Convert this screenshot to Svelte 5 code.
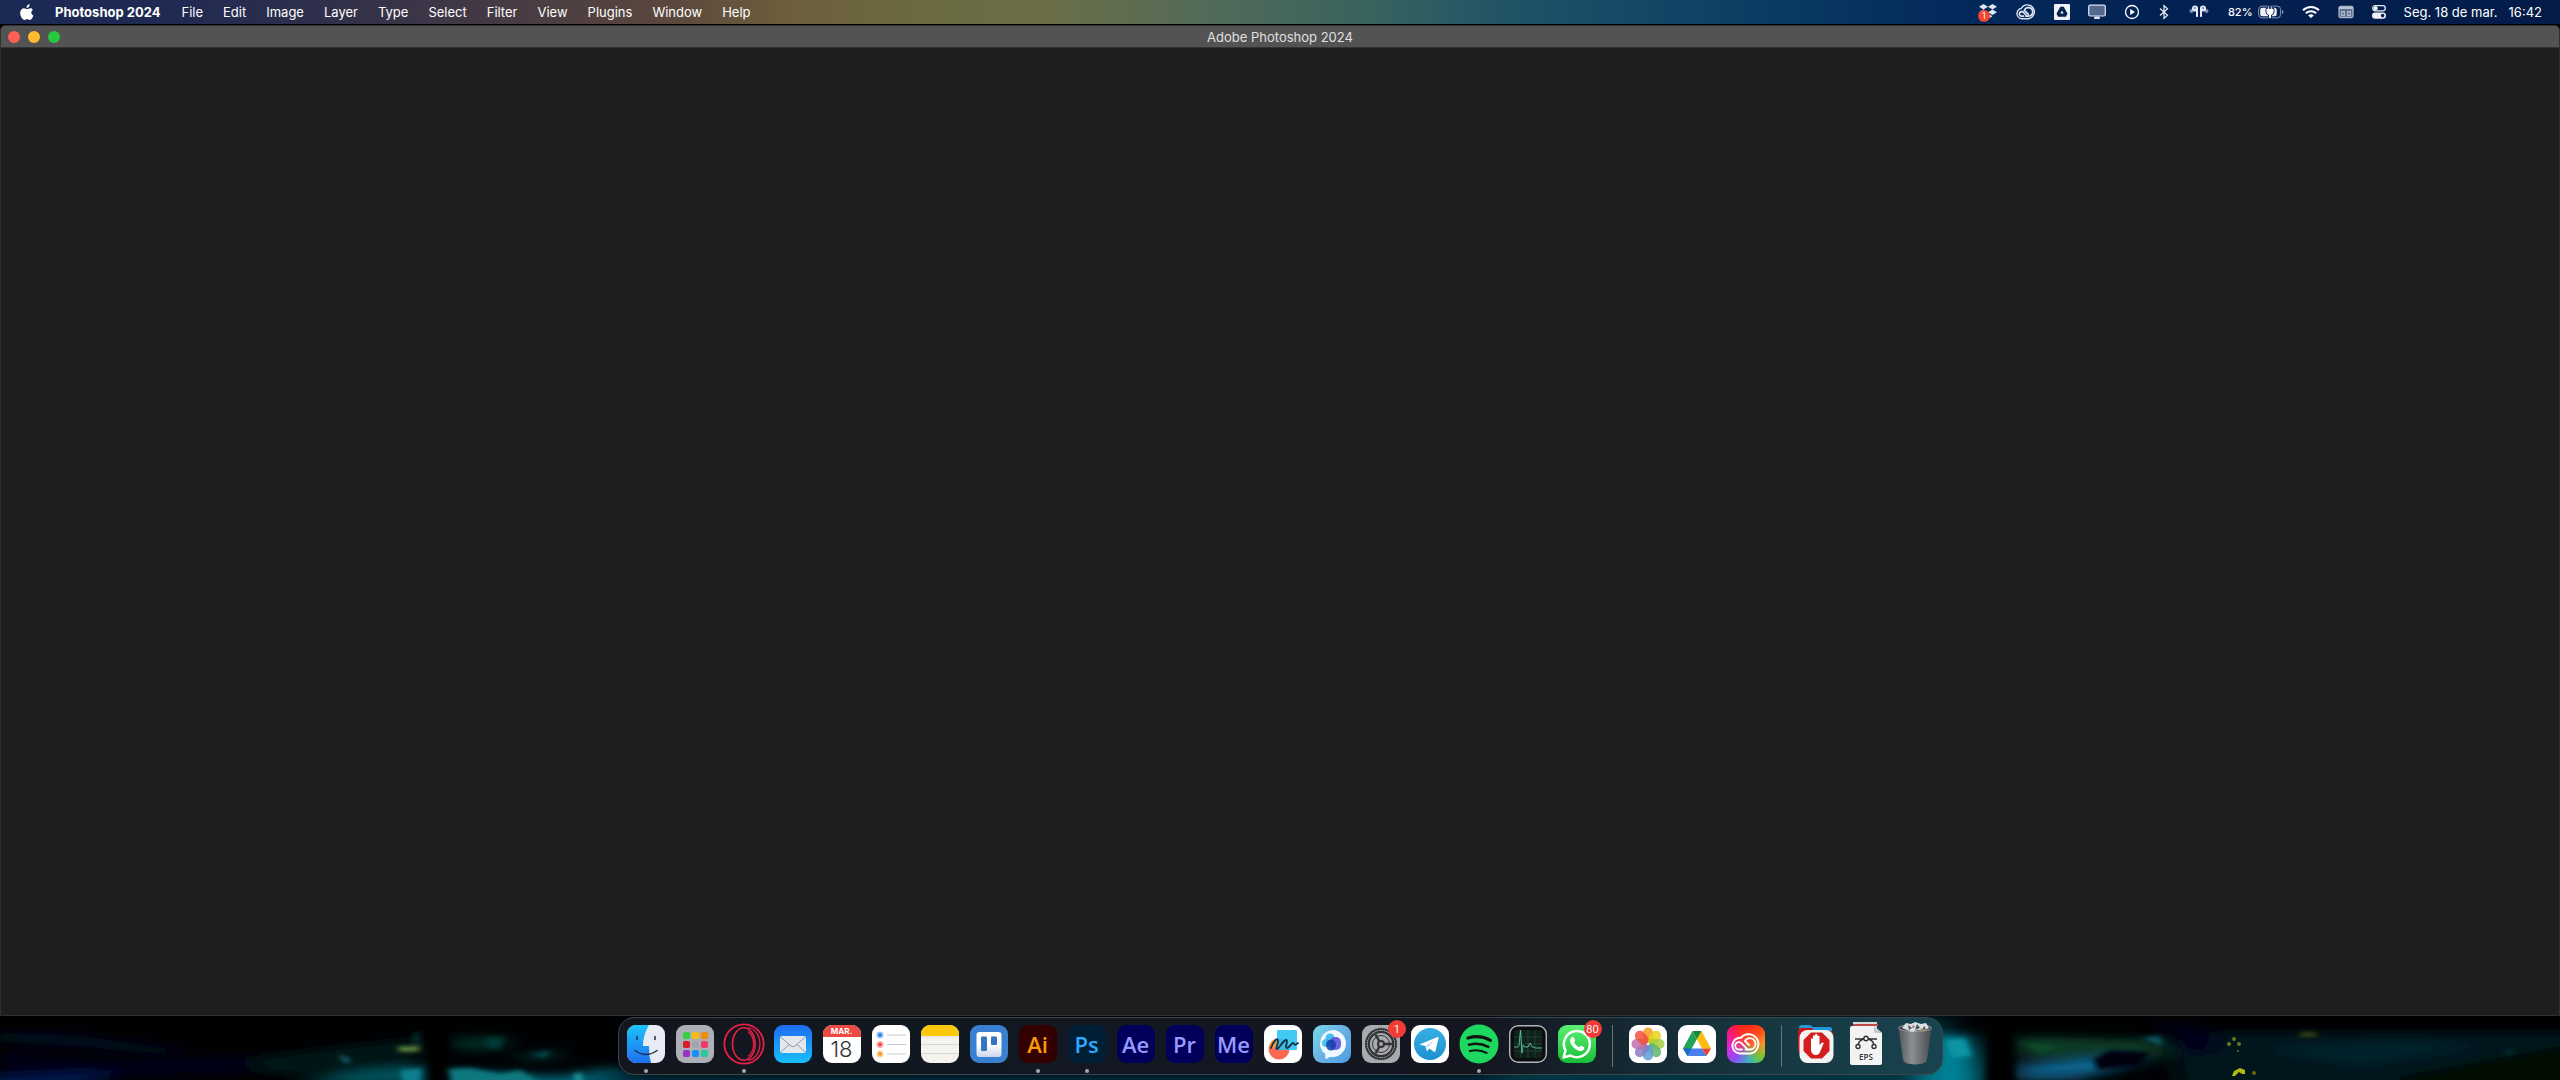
<script>
  const menus = ['File', 'Edit', 'Image', 'Layer', 'Type', 'Select', 'Filter', 'View', 'Plugins', 'Window', 'Help'];
  const main = [
    { id: 'finder', name: 'Finder', open: true },
    { id: 'launchpad', name: 'Launchpad' },
    { id: 'opera', name: 'Opera', open: true },
    { id: 'mail', name: 'Mail' },
    { id: 'calendar', name: 'Calendar' },
    { id: 'reminders', name: 'Reminders' },
    { id: 'notes', name: 'Notes' },
    { id: 'trello', name: 'Trello' },
    { id: 'ai', name: 'Illustrator', label: 'Ai', open: true },
    { id: 'ps', name: 'Photoshop', label: 'Ps', open: true },
    { id: 'ae', name: 'After Effects', label: 'Ae' },
    { id: 'pr', name: 'Premiere Pro', label: 'Pr' },
    { id: 'me', name: 'Media Encoder', label: 'Me' },
    { id: 'freeform', name: 'Freeform' },
    { id: 'chat', name: 'Chat' },
    { id: 'settings', name: 'Settings', badge: '1' },
    { id: 'telegram', name: 'Telegram' },
    { id: 'spotify', name: 'Spotify', open: true },
    { id: 'activity', name: 'Activity Monitor' },
    { id: 'whatsapp', name: 'WhatsApp', badge: '80' }
  ];
  const recent = [
    { id: 'photos', name: 'Photos' },
    { id: 'drive', name: 'Google Drive' },
    { id: 'cc', name: 'Creative Cloud' }
  ];
  const files = [
    { id: 'folder', name: 'Downloads' },
    { id: 'eps', name: 'EPS files' },
    { id: 'trash', name: 'Trash' }
  ];
  const groups = [main, recent, files];
  const petals = ['#f79a1e', '#e8d21a', '#a5cf3c', '#5fb56b', '#5a9fd8', '#8a7cc4', '#c070a8', '#f0503c'];
  const tiles = ['#3ad13e', '#f8bd10', '#f58a07', '#d81e28', '#a0a4ac', '#f03c64', '#9536c8', '#1593f5', '#28c8a0'];
  const teeth = Array.from({ length: 36 }, (_, i) => i * 10);
</script>

<div class="desktop">
  <svg class="wallpaper" viewBox="0 0 2560 64" preserveAspectRatio="none" aria-hidden="true">
    <defs>
      <filter id="soft" filterUnits="userSpaceOnUse" x="-60" y="-30" width="2680" height="124"><feGaussianBlur stdDeviation="14 5" /></filter>
      <filter id="fine" filterUnits="userSpaceOnUse" x="-60" y="-30" width="2680" height="124"><feGaussianBlur stdDeviation="3 2" /></filter>
    </defs>
    <rect width="2560" height="64" fill="#000103" />
    <g filter="url(#soft)">
      <path d="M0 16 L80 20 L170 32 L170 40 L80 30 L0 26Z" fill="#020a20" />
      <path d="M0 36 L100 44 L300 40 L240 58 L0 64Z" fill="#010318" />
      <path d="M-20 60 L110 54 L90 70 L-20 72Z" fill="#05194a" />
      <path d="M250 42 L330 32 L425 22 L420 52 L340 62 L260 56Z" fill="#021619" />
      <path d="M300 70 L360 54 L425 50 L430 70Z" fill="#045058" />
      <path d="M450 54 L520 58 L560 60 L618 50 L640 76 L450 76Z" fill="#046070" />
      <path d="M452 22 L505 20 L500 34 L455 34Z" fill="#043028" />
      <path d="M515 42 L555 34 L550 44Z" fill="#074c4c" />
      <path d="M600 58 H1960 V70 H600Z" fill="#032c3c" />
      <path d="M1500 0 H1950 V70 H1500Z" fill="#063e4c" opacity=".7" />
      <path d="M1930 20 L1968 18 L1978 44 L1982 76 L1920 76Z" fill="#068296" />
      <path d="M2015 20 L2160 24 L2165 40 L2120 46 L2020 42Z" fill="#073b28" />
      <path d="M2015 48 L2130 38 L2140 46 L2080 64 L2015 66Z" fill="#075478" />
      <path d="M2170 16 L2580 16 V74 H2180Z" fill="#01141c" />
      <path d="M2260 32 L2400 24 L2480 30 L2360 50Z" fill="#022429" />
      <path d="M2400 60 L2510 40 L2580 26 V74 H2400Z" fill="#020f06" />
      <path d="M2165 4 L2220 20 L2210 40 L2175 34Z" fill="#01051a" />
    </g>
    <path d="M424 -10 H450 L448 76 H430Z" fill="#000" filter="url(#fine)" />
    <path d="M1990 -10 H2010 L2016 76 H1986Z" fill="#000204" filter="url(#fine)" />
    <g filter="url(#fine)">
      <path d="M398 31 L419 31 V35 L399 35Z" fill="#7aa848" />
      <path d="M412 18 L420 16 L419 30 L414 28Z" fill="#06302c" />
      <path d="M338 38 L351 44 L346 48Z" fill="#1d7680" />
      <path d="M400 54 L422 52 L420 70 H404Z" fill="#088090" />
      <path d="M448 53 L470 52 L500 58 L520 54 L545 70 H455Z" fill="#08787e" />
      <path d="M575 58 L580 56 L582 66 H576Z" fill="#2ab4b4" />
      <path d="M486 22 L504 21 L500 33 L488 32Z" fill="#063a38" />
      <path d="M530 38 L552 35 L545 41Z" fill="#085656" />
      <path d="M2300 17 L2317 17 L2314 20 H2301Z" fill="#585e16" />
      <path d="M2505 36 L2510 34 L2512 38Z" fill="#1c6860" />
      <path d="M1945 24 L1965 22 L1972 40 L1952 42Z" fill="#0895a4" />
      <path d="M2020 26 L2060 30 L2040 38Z" fill="#0a4826" />
      <path d="M2025 54 L2120 42 L2090 54Z" fill="#0a628c" />
      <path d="M2140 22 L2160 20 L2164 30Z" fill="#0a5868" />
      <path d="M2092 44 L2110 34 L2150 36 L2140 50 L2096 54Z" fill="#000409" />
    </g>
    <g fill="#6c741f"><circle cx="2234" cy="23" r="2" /><circle cx="2229" cy="28" r="2" /><circle cx="2239" cy="28" r="2" /><circle cx="2238" cy="35" r="1" /></g>
    <path d="M2232 60 L2234 55 L2240 52 L2245 54 L2245 58 L2242 58 L2239 56 L2235 60Z" fill="#b5b80c" />
    <circle cx="2254" cy="57" r="2" fill="#666c0a" />
  </svg>

  <header class="menubar">
    <nav class="menus">
      <button class="apple" aria-label="Apple">
        <svg width="14" height="17" viewBox="0 0 14 17" fill="#fff"><path d="M9.7.2c.1 1.9-1.4 3.6-3.2 3.6C6.3 2 7.9.4 9.7.2ZM12.8 5.9c-2.2 1.3-1.9 4.4.6 5.5-.6 1.9-2 4.5-3.5 4.6-1 0-1.5-.7-2.7-.7s-1.700.7-2.700.7C2.4 16-.1 11.6.2 8.5.4 5.9 2.1 4.3 4 4.3c1.300 0 2.200.8 3.200.8.9 0 1.900-.9 3.500-.8.9 0 1.700.6 2.100 1.600Z" /></svg>
      </button>
      <button class="appname">Photoshop 2024</button>
      {#each menus as m}<button>{m}</button>{/each}
    </nav>
    <div class="status">
      <button class="i-dropbox" aria-label="Dropbox">
        <svg width="20" height="20" viewBox="0 0 20 20"><path d="M5.500 2 10 4.700 5.500 7.500 1 4.700ZM14.500 2 19 4.700 14.500 7.500 10 4.700ZM5.500 7.500 10 10.300 5.500 13 1 10.300ZM14.500 7.500 19 10.300 14.500 13 10 10.300ZM10 11.500 14.500 14.200 10 17 5.500 14.200Z" fill="#dfe6f0" /></svg>
        <span class="mini">1</span>
      </button>
      <button aria-label="Creative Cloud">
        <svg width="20" height="16" viewBox="0 0 20 16" fill="none" stroke="#dfe6f0" stroke-linecap="round"><path d="M6 14.800A5.200 5.200 0 0 1 5.200 4.500 7 7 0 1 1 12.500 14.800Z" stroke-width="1.400" /><path d="M11 12 7.500 8.500A2.300 2.300 0 1 0 6 12.200h1.500M10 12.200h2.500A4.300 4.300 0 1 0 8.300 6.500L12.500 10.300" stroke-width="1.700" /></svg>
      </button>
      <button aria-label="Google Drive">
        <svg width="16" height="16" viewBox="0 0 16 16"><rect width="16" height="16" rx="1" fill="#eef2f8" /><path d="M6.300 2.800h3.400L13.500 9.800 11.800 12.800H4.200L2.500 9.800ZM8 6.500 6.300 9.600h3.400Z" fill="#06204e" fill-rule="evenodd" /></svg>
      </button>
      <button aria-label="Display">
        <svg width="18" height="16" viewBox="0 0 18 16"><rect x=".7" y="1.200" width="16.600" height="10.800" rx="1.500" fill="#526a90" stroke="#dfe6f0" stroke-width="1.200" /><path d="M6.500 12.500h5l.5 2.500H6Z" fill="#dfe6f0" /></svg>
      </button>
      <button aria-label="Now playing">
        <svg width="16" height="16" viewBox="0 0 16 16"><circle cx="8" cy="8" r="6.500" fill="none" stroke="#fff" stroke-width="1.300" /><path d="M6.200 5v6L11 8Z" fill="#fff" /></svg>
      </button>
      <button class="narrow" aria-label="Bluetooth">
        <svg width="10" height="16" viewBox="0 0 10 16" fill="none" stroke="#e6ebf4" stroke-width="1.200"><path d="M1 4.500 8.500 11.300 5 14.500V1.500L8.500 4.700 1 11.500" /></svg>
      </button>
      <button class="narrow" aria-label="AirPods">
        <svg width="20" height="16" viewBox="0 0 20 16" fill="#e6ebf4"><circle cx="2.500" cy="7" r="2" fill="#7f90b0" /><circle cx="17.500" cy="7" r="2" fill="#7f90b0" /><circle cx="6" cy="4.500" r="3" /><circle cx="14" cy="4.500" r="3" /><path d="M6 4h3v8.500q-1 1-2 0V7ZM14 4h-3v8.500q1 1 2 0V7Z" /><circle cx="5.800" cy="4" r=".8" fill="#06204e" /><circle cx="14.200" cy="4" r=".8" fill="#06204e" /></svg>
      </button>
      <button class="battery" aria-label="Battery 82%">
        <span>82%</span>
        <svg width="26" height="14" viewBox="0 0 26 14"><rect x=".6" y="1.100" width="22" height="11.800" rx="3.500" fill="none" stroke="#8796b4" stroke-width="1" /><rect x="2.200" y="2.700" width="16.500" height="8.600" rx="2" fill="#eef2f8" /><path d="M24 5v4q1.500-.6 1.500-2T24 5Z" fill="#8796b4" /><path d="M9.700.5v3H8V7q0 2.500 2.500 3v3.500h3V10q2.500-.5 2.500-3V3.500h-1.700v-3h-1.500v3h-1.500v-3Z" fill="#fff" stroke="#06204e" stroke-width=".9" /></svg>
      </button>
      <button aria-label="Wi-Fi">
        <svg width="18" height="14" viewBox="0 0 18 14" fill="none" stroke="#fff" stroke-width="2"><path d="M1 5.300a11.500 11.500 0 0 1 16 0M3.800 8.300a7.500 7.500 0 0 1 10.400 0" /><path d="M9 13 6.200 10.500a4 4 0 0 1 5.600 0Z" fill="#fff" stroke="none" /></svg>
      </button>
      <button aria-label="Calendar">
        <svg width="16" height="14" viewBox="0 0 16 14"><rect x="1" y="1.500" width="14" height="11" rx="1.500" fill="#5f7192" stroke="#a9b4c8" stroke-width="1.300" /><path d="M1 3h14" stroke="#b9c2d2" stroke-width="2" /><path d="M3 6h4v5H3ZM9 6h4v5H9Z" fill="#a9b4c8" /><path d="M4.500 7.500h1v2h-1ZM10.500 7.500h1v2h-1Z" fill="#26406c" /></svg>
      </button>
      <button aria-label="Control Center">
        <svg width="14" height="16" viewBox="0 0 14 16"><rect x=".7" y="1.700" width="12.600" height="5.100" rx="2.500" fill="none" stroke="#e6ebf4" stroke-width="1.300" /><circle cx="3.700" cy="4.200" r="2" fill="#fff" /><rect y="8.400" width="14" height="6.400" rx="3.200" fill="#eef2f8" /><circle cx="10.600" cy="11.600" r="1.800" fill="#06204e" /></svg>
      </button>
      <button class="clock"><span>Seg. 18 de mar.</span><time>16:42</time></button>
    </div>
  </header>

  <main class="window">
    <div class="titlebar">
      <div class="lights">
        <button class="close" aria-label="Close"></button>
        <button class="min" aria-label="Minimize"></button>
        <button class="max" aria-label="Zoom"></button>
      </div>
      <h1>Adobe Photoshop 2024</h1>
    </div>
    <div class="canvas"></div>
  </main>

  <footer class="dockarea">
    <div class="dock">
      {#each groups as g, gi}
        {#if gi > 0}<span class="sep"></span>{/if}
        {#each g as app}
          <button class="app {app.id}" aria-label={app.name}>
            {#if app.label}
              <span class="adobe">{app.label}</span>
            {:else if app.id === 'calendar'}
              <span class="month">MAR.</span><span class="day">18</span>
            {:else}
              <svg viewBox="0 0 38 38">
                {#if app.id === 'finder'}
                  <defs><linearGradient id="fb" x2="0" y2="1"><stop stop-color="#1cc4fb" /><stop offset="1" stop-color="#1e6ff2" /></linearGradient><clipPath id="rr"><rect width="38" height="38" rx="9" /></clipPath></defs>
                  <g clip-path="url(#rr)"><rect width="38" height="38" fill="#e6ebf6" /><path d="M0 0H22Q16 10 16 21H22Q21.500 30 24 38H0Z" fill="url(#fb)" /></g>
                  <path d="M10 11.500v3M28 11.500v3M8 25.500q11 8 22 0" fill="none" stroke="#1b2c46" stroke-width="1.500" stroke-linecap="round" />
                {:else if app.id === 'launchpad'}
                  <rect width="38" height="38" rx="9" fill="#acafb6" />
                  {#each tiles as c, i}<rect x={7 + (i % 3) * 9} y={7 + Math.floor(i / 3) * 9} width="7" height="7" rx="1.700" fill={c} />{/each}
                {:else if app.id === 'opera'}
                  <g fill="none" stroke="#ec1f47"><circle cx="19" cy="19" r="19.700" stroke-width="1.800" /><ellipse cx="18.800" cy="19" rx="11.300" ry="16.300" stroke-width="1.600" /><path d="M23 2.500C39 6 39 32 23 35.500" stroke-width="1.200" /><path d="M23 6.500c7.500 6 7.500 19 0 25" stroke-width="1.200" /></g>
                {:else if app.id === 'mail'}
                  <defs><linearGradient id="mb" x2="0" y2="1"><stop stop-color="#1e6cf2" /><stop offset="1" stop-color="#19bffb" /></linearGradient></defs>
                  <rect width="38" height="38" rx="9" fill="url(#mb)" /><rect x="6" y="11" width="26" height="17" rx="2" fill="#e4e7ec" /><path d="M6.500 12 17 21q2 1.600 4 0L31.500 12M6.500 27.500 15 19.500M31.500 27.500 23 19.500" fill="none" stroke="#8e98a6" />
                {:else if app.id === 'reminders'}
                  <rect width="38" height="38" rx="9" fill="#fff" />
                  {#each ['#1a7cf5', '#f04438', '#f5970c'] as c, i}<circle cx="8" cy={10 + i * 9.5} r="3" fill="none" stroke={c} stroke-opacity=".6" /><circle cx="8" cy={10 + i * 9.5} r="2" fill={c} /><path d="M15 {10 + i * 9.5}h19" stroke="#c9cace" />{/each}
                {:else if app.id === 'notes'}
                  <clipPath id="nr"><rect width="38" height="38" rx="9" /></clipPath>
                  <g clip-path="url(#nr)"><rect width="38" height="38" fill="#f4f3ee" /><rect width="38" height="11" fill="#fcc80c" /><path d="M0 19.500h38M0 28.500h38" stroke="#d9d8d3" /><path d="M0 12h38" stroke="#d0cdc2" stroke-dasharray="1 1" /></g>
                {:else if app.id === 'trello'}
                  <defs><linearGradient id="tg" x2="0" y2="1"><stop offset=".5" stop-color="#fff" /><stop offset="1" stop-color="#c9d6ee" /></linearGradient></defs>
                  <rect width="38" height="38" rx="9" fill="#3a80d0" /><rect x="6.500" y="7" width="25" height="25" rx="3" fill="url(#tg)" /><rect x="11" y="11.500" width="6" height="14.500" rx="1" fill="#3574c0" /><rect x="21" y="11.500" width="6" height="8.500" rx="1" fill="#3574c0" />
                {:else if app.id === 'freeform'}
                  <rect width="38" height="38" rx="9" fill="#fff" /><circle cx="15" cy="24" r="10.500" fill="#fb6a50" /><path d="M4.700 22a10.500 10.500 0 0 1 9-8.400V24Z" fill="#fb9a3c" /><rect x="13" y="5" width="20" height="20" rx="1" fill="#28c3f2" opacity=".88" /><path d="M7 23C10 15 14 12 14 16s-3 8-1 8 6-9 9-9-2 8 1 8 4-5 6-5 0 4 5 0" fill="none" stroke="#10344c" stroke-width="1.800" stroke-linecap="round" />
                {:else if app.id === 'chat'}
                  <defs><linearGradient id="cg" x2="1" y2=".8"><stop stop-color="#74dcea" /><stop offset=".5" stop-color="#6cb4e4" /><stop offset="1" stop-color="#52a0e4" /></linearGradient></defs>
                  <rect width="38" height="38" rx="9" fill="url(#cg)" /><path d="M19.500 5a13.500 13.500 0 0 1 0 27q-1.500 0-2.500-.3-2 2-5 2 1-2.500.2-4.700A13.500 13.500 0 0 1 19.500 5Z" fill="#eef8fe" /><circle cx="17" cy="13" r="4.500" fill="#32b7ee" opacity=".9" /><circle cx="13" cy="18" r="4" fill="#27b4e0" opacity=".8" /><rect x="17" y="12" width="11" height="13" rx="5" fill="#5b49d8" opacity=".85" /><ellipse cx="18" cy="20" rx="5" ry="5.500" fill="#0f3fae" opacity=".85" />
                {:else if app.id === 'settings'}
                  <rect width="38" height="38" rx="9" fill="#a9aaad" />
                  <g fill="none" stroke="#303236"><circle cx="19" cy="19" r="15" stroke-width="1.500" /><circle cx="19" cy="19" r="12.200" stroke-width="2.200" /><circle cx="19" cy="19" r="8.500" stroke-width="1" /><circle cx="19" cy="19" r="3" stroke-width="2" /><path d="M22 19h8M17.500 16.500 13.500 9.500M17.500 21.500 13.500 28.500" stroke-width="2.500" /></g>
                  {#each teeth as t}<path d="M19 2.800v2.500" stroke="#303236" stroke-width="1.200" transform="rotate({t} 19 19)" />{/each}
                {:else if app.id === 'telegram'}
                  <defs><linearGradient id="tl" x2="0" y2="1"><stop stop-color="#38b0e3" /><stop offset="1" stop-color="#1d8fd0" /></linearGradient></defs>
                  <rect width="38" height="38" rx="9" fill="#fff" /><circle cx="19" cy="19" r="16" fill="url(#tl)" /><path d="M9 19.200 26.500 12q1.500-.4 1 1.300L24.500 26q-.4 1.500-1.800.6L18.500 23.500 16.500 25.700q-.8.7-1-.4L14.500 21 9 19.800Z" fill="#fff" /><path d="M14.800 21 23.500 15.500 16.500 22.300Z" fill="#b5d4ea" />
                {:else if app.id === 'spotify'}
                  <circle cx="19" cy="19" r="19.500" fill="#1ed760" /><g fill="none" stroke="#101512" stroke-linecap="round"><path d="M8 13q12-3.500 22.500 2.300" stroke-width="3.200" /><path d="M9 19.700q10-2.700 19.300 2.200" stroke-width="2.700" /><path d="M10 26q9-2.200 16.500 1.900" stroke-width="2.200" /></g>
                {:else if app.id === 'activity'}
                  <rect x=".7" y=".7" width="36.600" height="36.600" rx="8.500" fill="#0b0c0c" stroke="#b3b5b8" stroke-width="1.400" /><rect x="5" y="5" width="28" height="28" rx="2" fill="#10211d" /><path d="M5 12h28M5 19h28M5 26h28M12 5v28M19 5v28M26 5v28" stroke="#284a40" stroke-width=".7" /><path d="M5 22h4l1-1.500L11.500 5 13 28l1-8 2 2h3l2-4 2 4h2l1 1h7" fill="none" stroke="#5cc4a0" stroke-width=".9" />
                {:else if app.id === 'whatsapp'}
                  <defs><linearGradient id="wg" x2="0" y2="1"><stop stop-color="#5bf075" /><stop offset="1" stop-color="#18be35" /></linearGradient></defs>
                  <rect width="38" height="38" rx="9" fill="url(#wg)" /><path d="M5.500 32.500 7.500 25.500A13 13 0 1 1 12.500 30.500Z" fill="none" stroke="#fff" stroke-width="2.500" stroke-linejoin="round" /><path d="M13.500 12.500q1.500-1.500 2.500.3l1 2.400q.3.700-1 2.100 1.500 3.300 5 4.900 1.300-1.700 2-1.500l3 1.400q.7.400.1 2-1.200 2.600-4.400 2C17 24.700 12.700 20.500 12 16q0-2.200 1.500-3.500Z" fill="#fff" />
                {:else if app.id === 'photos'}
                  <rect width="38" height="38" rx="9" fill="#fff" />
                  {#each petals as c, i}<rect x="14" y="2.500" width="10" height="15.500" rx="5" fill={c} opacity=".85" transform="rotate({i * 45} 19 19)" />{/each}
                {:else if app.id === 'drive'}
                  <rect width="38" height="38" rx="9" fill="#fff" /><path d="M14.500 6 19 14 9.500 31 5 23.500Z" fill="#1fa455" /><path d="M14.500 6h9L33 23.500h-9Z" fill="#fcbc12" /><path d="M9.500 31 14 23.500H24L28.500 31Z" fill="#4a80ec" /><path d="M5 23.500h9L9.500 31Z" fill="#1a66d2" /><path d="M24 23.500h9L28.500 31Z" fill="#e8432e" /><path d="M14.500 6h9L19 14Z" fill="#128840" />
                {:else if app.id === 'cc'}
                  <g fill="none" stroke="#fff" stroke-linecap="round"><path d="M12.500 28.500A7.800 7.800 0 1 1 14 12.800 9.800 9.800 0 1 1 24 28.500Z" stroke-width="2" /><path d="M20.500 24.300 14.500 18.200A3.700 3.700 0 1 0 12 24.500h3M18.500 24.500h5.500A5.700 5.700 0 1 0 18 16L22 20" stroke-width="1.800" /></g>
                {:else if app.id === 'folder'}
                  <path d="M1 3q0-3 3-3h8l3 2h17q2 0 2 3v10H1Z" fill="#2399dc" /><path d="M0 6q0-3 3-3h11l2 3h17q2 0 2 3v18H0Z" fill="#c51719" /><rect x="1.500" y="5" width="34" height="33" rx="8" fill="#f3f3f3" /><path d="M13 7.500h11L31.500 15v11L24 33.500H13L5.500 26V15Z" fill="#d41d1d" /><path d="M13 19v-5q1-1.300 2 0v-3q1-1.300 2.100 0v-1.500q1.100-1.500 2.200 0V11q1.200-1.200 2.200 0v9l2-2q1.500-1 2.300 0L22 27q-1 3-4 3-4 0-5-4.500Z" fill="#fff" />
                {:else if app.id === 'eps'}
                  <path d="M6-3h24v8H6Z" fill="#d9d9d9" /><path d="M6-1h25v2H6Z" fill="#bd4747" /><path d="M5 1h22l8 7v30q0 2-2 2H5q-2 0-2-2V3q0-2 2-2Z" fill="#f3f3f3" /><path d="M27 1v5q0 2 2 2h6Z" fill="#c8c8c8" />
                  <g fill="none" stroke="#333" stroke-width="1.400"><path d="M8 14h8M22 14h8M11 20q1-5 6-6M27 20q-1-5-6-6" /><circle cx="19" cy="13.500" r="2.200" /><circle cx="11" cy="21.500" r="2" /><circle cx="27" cy="21.500" r="2" /></g>
                  <text x="19" y="35" text-anchor="middle">EPS</text>
                {:else}
                  <defs><linearGradient id="tr"><stop stop-color="#55585b" /><stop offset=".4" stop-color="#8c8f91" /><stop offset="1" stop-color="#4a4d50" /></linearGradient></defs>
                  <path d="M2.500 2 35.500 2 31 35q-1 4-12 4.500Q8 39 7 35Z" fill="url(#tr)" /><ellipse cx="19" cy="3" rx="16.500" ry="3.500" fill="#3c4043" stroke="#999c9e" /><path d="M6 3 10-2l5 1 4-2 6 2 5-1 3 5-6 3-5-1-6 2-5-2Z" fill="#dcdfe1" /><path d="M12 0l4 3-3 2ZM21-1l3 4-5 2ZM28 1l2 3-4 2Z" fill="#3f5468" /><path d="M17 0l2 2-3 1Z" fill="#c2523f" /><path d="M25 3l3 2-4 1Z" fill="#b08a40" />
                {/if}
              </svg>
            {/if}
            {#if app.badge}<span class="badge">{app.badge}</span>{/if}
            {#if app.open}<span class="dot"></span>{/if}
          </button>
        {/each}
      {/each}
    </div>
  </footer>
</div>

<style>
  :global(body) { background: #000; }
  * { box-sizing: border-box; }
  button { border: 0; padding: 0; background: none; color: inherit; font: inherit; display: flex; align-items: center; justify-content: center; }
  svg { display: block; flex: none; }
  .desktop { position: relative; display: flex; flex-direction: column; min-height: 100vh; font-family: Inter, sans-serif; overflow: hidden; }
  .wallpaper { position: absolute; left: 0; bottom: 0; width: 100%; height: 64px; }
  .menubar {
    display: flex; justify-content: space-between; height: 24px; padding: 0 18px 0 20px; color: #fff; font-size: 13px; line-height: 24px;
    background: linear-gradient(90deg, #1b2955 0%, #202a52 7%, #30304a 13%, #473b43 20%, #5a473d 26%, #6e5f3d 31%, #6b6a40 36%, #6a6e48 41%, #536b58 47%, #36625f 54%, #235565 58%, #164a66 63%, #0a3c62 69%, #032a5b 76%, #022152 85%, #041b48 100%);
  }
  .menus, .status { display: flex; align-items: center; white-space: nowrap; }
  .menus { gap: 20px; }
  .appname { font-weight: 700; padding: 0 1px; }
  .status { gap: 18px; }
  .narrow { padding: 0 1px; }
  .i-dropbox { position: relative; }
  .mini { position: absolute; left: 0; bottom: 0; width: 12px; height: 12px; border-radius: 6px; background: #f4452e; color: #fff; font-size: 9px; line-height: 12px; text-align: center; }
  .battery { gap: 5px; font-size: 11px; font-weight: 500; }
  .clock { gap: 11px; }
  .window { position: relative; flex: 1; display: flex; flex-direction: column; margin: 1px 0 64px; border: 1px solid #303030; border-radius: 5px 5px 0 0; background: #1e1e1e; }
  .titlebar { display: grid; grid-template-columns: 1fr auto 1fr; align-items: center; height: 22px; padding: 0 7px; background: #535353; border-bottom: 1px solid #333; border-radius: 4px 4px 0 0; }
  .lights { display: flex; gap: 8px; }
  .lights button { width: 12px; height: 12px; border-radius: 6px; }
  .close { background: #ff5f57; }
  .min { background: #febc2e; }
  .max { background: #28c840; }
  h1 { margin: 0; font-size: 13px; line-height: 20px; font-weight: 400; color: #e0e0e0; }
  .canvas { flex: 1; }
  .dockarea { position: absolute; left: 0; right: 0; bottom: 5px; display: flex; justify-content: center; }
  .dock { display: flex; gap: 11px; height: 58px; padding: 7px 8px 0; border: 1px solid #3d454c; border-radius: 16px; background: linear-gradient(90deg, #14151e 0%, #111820 20%, #141722 48%, #14151f 65%, #152831 76%, #163942 88%, #194350 100%); }
  .app { position: relative; width: 38px; height: 38px; border-radius: 9px; }
  .app svg { width: 38px; height: 38px; overflow: visible; }
  .sep { width: 1px; height: 42px; margin: 0 5px; background: #66757c; }
  .dot { position: absolute; left: 17px; bottom: -10px; width: 4px; height: 4px; border-radius: 2px; background: #a5a8ad; }
  .badge { position: absolute; right: -6px; top: -5px; width: 18px; height: 18px; border-radius: 9px; background: #f03c36; color: #fff; font-size: 10px; line-height: 18px; text-align: center; }
  .adobe { font: 600 22px/38px "Open Sans", sans-serif; }
  .ai { background: #330000; color: #ff9a00; }
  .ps { background: #001e36; color: #31a8ff; }
  .ae, .pr, .me { background: #00005b; color: #9999ff; }
  .calendar { flex-direction: column; justify-content: flex-start; overflow: hidden; background: #fff; }
  .month { width: 100%; height: 12px; background: #ec4a42; color: #fff; font-size: 8px; line-height: 13px; font-weight: 700; text-align: center; }
  .day { color: #333; font-size: 22px; line-height: 24px; font-weight: 300; }
  .cc { background: radial-gradient(circle at 55% 40%, #fb5030 0%, transparent 60%), conic-gradient(#ff1a10 0deg, #ff3c10 40deg, #ffa020 85deg, #6cc83c 135deg, #3cb4c8 170deg, #8a50f0 215deg, #d82ce0 255deg, #fc1480 305deg, #ff1a10 345deg); }
  text { font: 600 8px "Open Sans", sans-serif; fill: #333; }
</style>
